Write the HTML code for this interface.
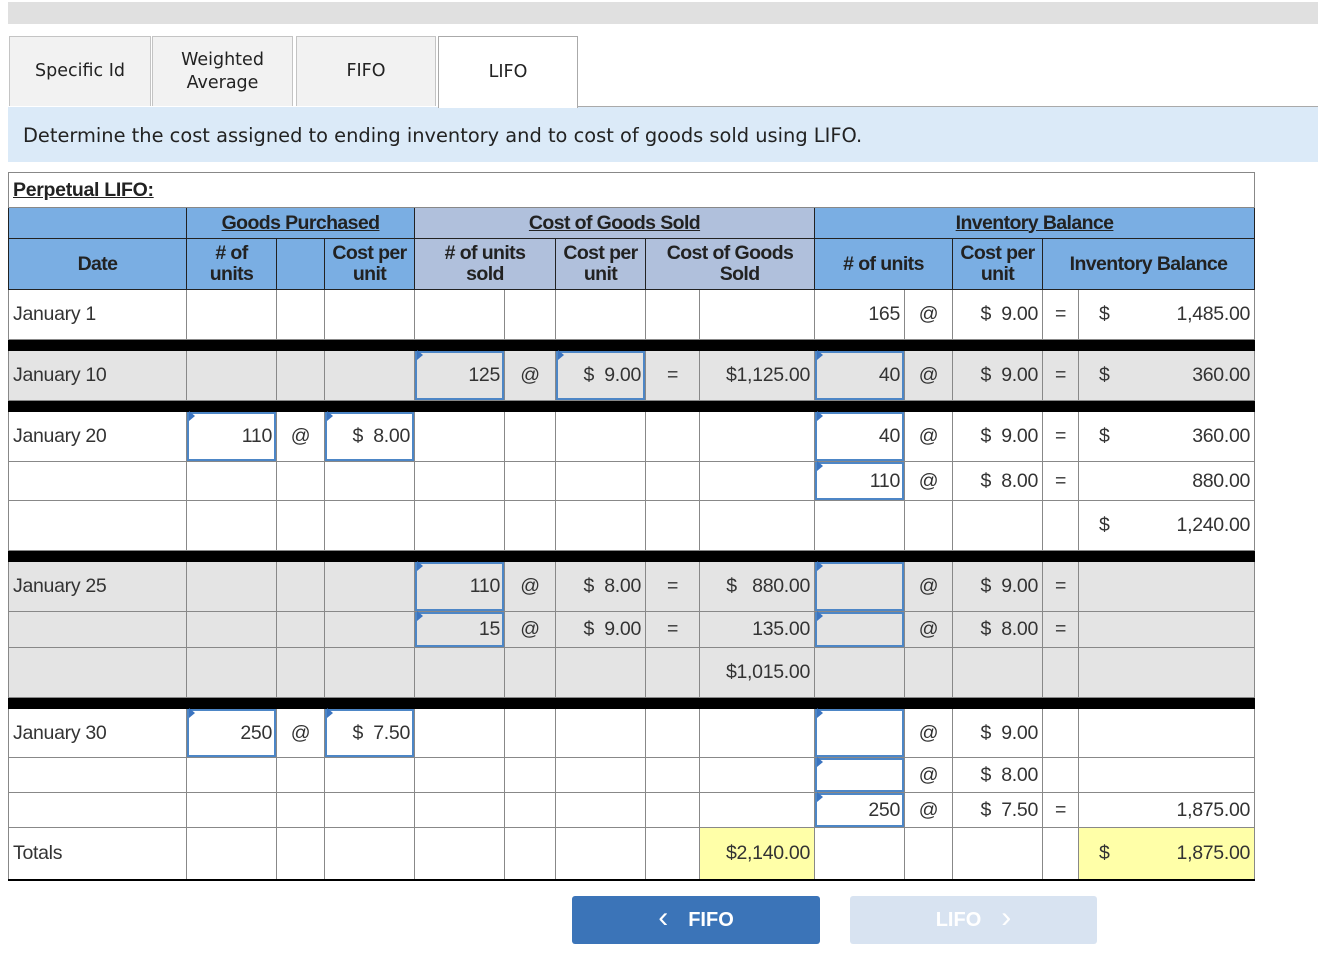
<!DOCTYPE html>
<html><head><meta charset="utf-8">
<style>
body{margin:0;width:1318px;height:964px;background:#fff;position:relative;overflow:hidden;font-family:"Liberation Sans",Arial,sans-serif}
.bar{position:absolute;left:8px;top:2px;width:1310px;height:22px;background:#e0e0e0}
.tab{position:absolute;top:36px;height:69px;background:#f2f2f2;border:1px solid #c4c4c4;border-bottom:none;font-family:"DejaVu Sans",Verdana,sans-serif;font-size:17.5px;color:#222;display:flex;align-items:center;justify-content:center;text-align:center;line-height:23px}
.tab.act{background:#fff;border-color:#aaa;height:71px;z-index:2}
.tabline{position:absolute;left:577px;top:106px;width:741px;height:1px;background:#aaa}
.band{position:absolute;left:8px;top:107px;width:1310px;height:55px;background:#dbeaf8;font-family:"DejaVu Sans",Verdana,sans-serif;font-size:19.4px;color:#222;line-height:57px;padding-left:15px;box-sizing:border-box}
table{position:absolute;left:8px;top:172px;border-collapse:collapse;table-layout:fixed;width:1247px}
td{border:1px solid #888;padding:0 4px;font-size:19.5px;color:#333;position:relative;white-space:nowrap;overflow:visible;letter-spacing:-0.3px}
.r{text-align:right}.c{text-align:center}
.t td{border:1px solid #888;height:34px;font-weight:bold;text-decoration:underline;font-size:19.5px;color:#222;padding-left:4px}
.h td{background:#7aaee3;border-color:#222;font-weight:bold;color:#222;text-align:center;line-height:21px;padding:0;letter-spacing:-0.6px}
.h td.g{background:#b0c0dc}
.h1 td{height:30px}
.h1 td span{text-decoration:underline}
.h2 td{height:50px}
.sep td{background:#000;height:10px;padding:0;border-color:#000}
.gr td{background:#e4e4e4}
.in{box-shadow:inset 0 0 0 2px #4d86c6;border-top-color:#fff}
.in::after{content:"";position:absolute;left:2px;top:2px;border-top:5px solid transparent;border-bottom:5px solid transparent;border-left:6px solid #3b74c0;margin-top:-3px}
.gr .in{background:#e4e4e4}
.y{background:#ffffa8 !important;border-bottom:2px solid #000 !important}
.d{float:left;padding-left:16px}
.btn{position:absolute;top:896px;height:48px;border-radius:3px;color:#fff;font-weight:bold;font-size:20px;display:flex;align-items:center;justify-content:center}
</style></head><body>
<div class="bar"></div>
<div class="tab" style="left:9px;width:140px">Specific Id</div>
<div class="tab" style="left:152px;width:139px">Weighted<br>Average</div>
<div class="tab" style="left:296px;width:138px">FIFO</div>
<div class="tab act" style="left:438px;width:138px">LIFO</div>
<div class="tabline"></div>
<div class="band">Determine the cost assigned to ending inventory and to cost of goods sold using LIFO.</div>

<table>
<colgroup>
<col style="width:178px"><col style="width:90px"><col style="width:48px"><col style="width:90px"><col style="width:90px"><col style="width:51px"><col style="width:90px"><col style="width:54px"><col style="width:115px"><col style="width:90px"><col style="width:48px"><col style="width:90px"><col style="width:36px"><col style="width:176px">
</colgroup>
<tr class="t"><td colspan="14">Perpetual LIFO:</td></tr>
<tr class="h h1"><td></td><td colspan="3"><span>Goods Purchased</span></td><td colspan="5" class="g"><span>Cost of Goods Sold</span></td><td colspan="5"><span>Inventory Balance</span></td></tr>
<tr class="h h2"><td>Date</td><td># of<br>units</td><td></td><td>Cost per<br>unit</td><td colspan="2" class="g"># of units<br>sold</td><td class="g">Cost per<br>unit</td><td colspan="2" class="g">Cost of Goods<br>&nbsp;&nbsp;&nbsp;&nbsp;Sold</td><td colspan="2"># of units</td><td>Cost per<br>unit</td><td colspan="2">Inventory Balance</td></tr>

<tr style="height:50px"><td>January 1</td><td></td><td></td><td></td><td></td><td></td><td></td><td></td><td></td><td class="r">165</td><td class="c">@</td><td class="r">$&nbsp;&nbsp;9.00</td><td class="c">=</td><td class="r"><span class="d">$</span>1,485.00</td></tr>
<tr class="sep"><td colspan="14"></td></tr>
<tr class="gr" style="height:50px"><td>January 10</td><td></td><td></td><td></td><td class="r in">125</td><td class="c">@</td><td class="r in">$&nbsp;&nbsp;9.00</td><td class="c">=</td><td class="r">$1,125.00</td><td class="r in">40</td><td class="c">@</td><td class="r">$&nbsp;&nbsp;9.00</td><td class="c">=</td><td class="r"><span class="d">$</span>360.00</td></tr>
<tr class="sep"><td colspan="14"></td></tr>
<tr style="height:50px"><td>January 20</td><td class="r in">110</td><td class="c">@</td><td class="r in">$&nbsp;&nbsp;8.00</td><td></td><td></td><td></td><td></td><td></td><td class="r in">40</td><td class="c">@</td><td class="r">$&nbsp;&nbsp;9.00</td><td class="c">=</td><td class="r"><span class="d">$</span>360.00</td></tr>
<tr style="height:39px"><td></td><td></td><td></td><td></td><td></td><td></td><td></td><td></td><td></td><td class="r in">110</td><td class="c">@</td><td class="r">$&nbsp;&nbsp;8.00</td><td class="c">=</td><td class="r">880.00</td></tr>
<tr style="height:50px"><td></td><td></td><td></td><td></td><td></td><td></td><td></td><td></td><td></td><td></td><td></td><td></td><td></td><td class="r"><span class="d">$</span>1,240.00</td></tr>
<tr class="sep"><td colspan="14"></td></tr>
<tr class="gr" style="height:50px"><td>January 25</td><td></td><td></td><td></td><td class="r in">110</td><td class="c">@</td><td class="r">$&nbsp;&nbsp;8.00</td><td class="c">=</td><td class="r">$&nbsp;&nbsp;&nbsp;880.00</td><td class="in"></td><td class="c">@</td><td class="r">$&nbsp;&nbsp;9.00</td><td class="c">=</td><td></td></tr>
<tr class="gr" style="height:36px"><td></td><td></td><td></td><td></td><td class="r in">15</td><td class="c">@</td><td class="r">$&nbsp;&nbsp;9.00</td><td class="c">=</td><td class="r">135.00</td><td class="in"></td><td class="c">@</td><td class="r">$&nbsp;&nbsp;8.00</td><td class="c">=</td><td></td></tr>
<tr class="gr" style="height:50px"><td></td><td></td><td></td><td></td><td></td><td></td><td></td><td></td><td class="r">$1,015.00</td><td></td><td></td><td></td><td></td><td></td></tr>
<tr class="sep"><td colspan="14"></td></tr>
<tr style="height:49px"><td>January 30</td><td class="r in">250</td><td class="c">@</td><td class="r in">$&nbsp;&nbsp;7.50</td><td></td><td></td><td></td><td></td><td></td><td class="in"></td><td class="c">@</td><td class="r">$&nbsp;&nbsp;9.00</td><td></td><td></td></tr>
<tr style="height:35px"><td></td><td></td><td></td><td></td><td></td><td></td><td></td><td></td><td></td><td class="in"></td><td class="c">@</td><td class="r">$&nbsp;&nbsp;8.00</td><td></td><td></td></tr>
<tr style="height:35px"><td></td><td></td><td></td><td></td><td></td><td></td><td></td><td></td><td></td><td class="r in">250</td><td class="c">@</td><td class="r">$&nbsp;&nbsp;7.50</td><td class="c">=</td><td class="r">1,875.00</td></tr>
<tr style="height:52px;border-bottom:2px solid #000"><td style="border-top:1px solid #555">Totals</td><td></td><td></td><td></td><td></td><td></td><td></td><td></td><td class="r y">$2,140.00</td><td></td><td></td><td></td><td></td><td class="r y"><span class="d">$</span>1,875.00</td></tr>
</table>

<div class="btn" style="left:572px;width:248px;background:#3b74b8"><span style="font-size:30px;margin-right:20px;font-weight:normal;margin-top:-4px">&#8249;</span>FIFO</div>
<div class="btn" style="left:850px;width:247px;background:#d8e3f1">LIFO<span style="font-size:30px;margin-left:20px;font-weight:normal;margin-top:-4px">&#8250;</span></div>
</body></html>
